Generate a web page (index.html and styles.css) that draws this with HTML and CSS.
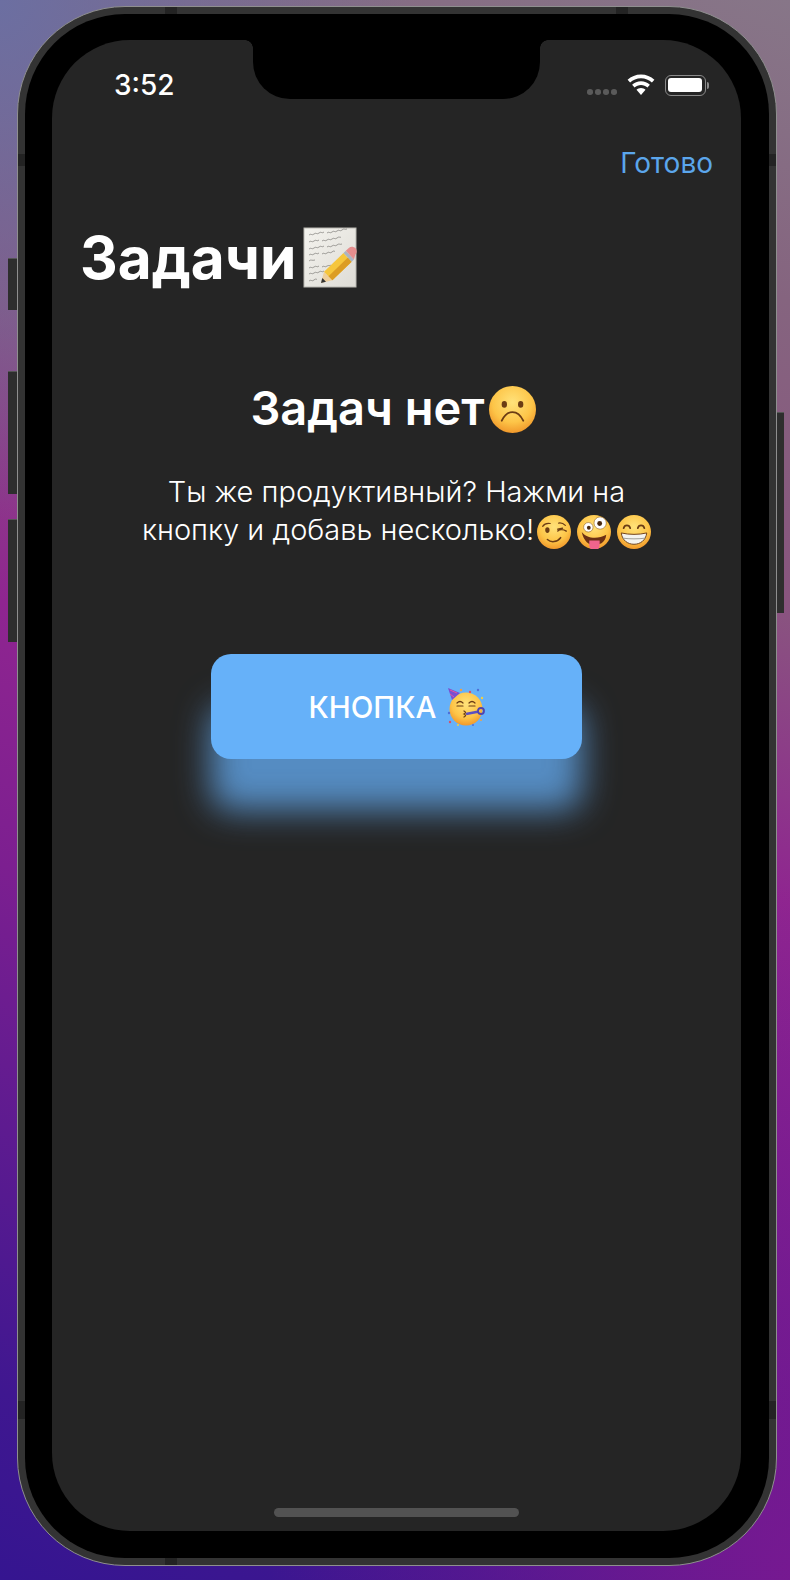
FILE: index.html
```html
<!DOCTYPE html>
<html lang="ru">

<head>
    <meta charset="UTF-8">
    <meta name="viewport" content="width=device-width, initial-scale=1.0">
    <title>Задачи</title>
    <link rel="stylesheet" href="styles.css">
</head>

<body>
    <svg class="defs" width="0" height="0">
        <defs>
            <radialGradient id="face" cx="50%" cy="35%" r="70%">
                <stop offset="0" stop-color="#ffe27a" />
                <stop offset="0.6" stop-color="#fdc548" />
                <stop offset="1" stop-color="#ee8f25" />
            </radialGradient>
            <linearGradient id="paper" x1="0" y1="0" x2="1" y2="1">
                <stop offset="0" stop-color="#f4f3ee" />
                <stop offset="1" stop-color="#dedcd6" />
            </linearGradient>
        </defs>
    </svg>

    <div class="device">
        <span class="side-btn btn-mute"></span>
        <span class="side-btn btn-up"></span>
        <span class="side-btn btn-down"></span>
        <span class="side-btn btn-power"></span>
        <span class="band band-top-l"></span>
        <span class="band band-top-r"></span>
        <span class="band band-bottom-l"></span>
        <span class="band band-side-l1"></span>
        <span class="band band-side-r1"></span>
        <span class="band band-side-l2"></span>
        <span class="band band-side-r2"></span>

        <div class="bezel">
            <div class="screen">
                <div class="notch"></div>

                <div class="status-bar">
                    <span class="status-time">3:52</span>
                    <div class="status-icons">
                        <div class="signal"><i></i><i></i><i></i><i></i></div>
                        <svg class="wifi" width="28" height="22" viewBox="0 0 28 22">
                            <path d="M14 0.500C8.800 0.500 4.100 2.500.6 5.800l2.500 2.800C5.900 6 9.800 4.300 14 4.300s8.100 1.700 10.900 4.300l2.500-2.800C23.900 2.500 19.200.5 14 .5z" fill="#fff" />
                            <path d="M14 7.200c-3.400 0-6.500 1.300-8.900 3.500l2.500 2.800c1.700-1.500 3.900-2.500 6.400-2.500s4.700 1 6.400 2.500l2.500-2.800C20.500 8.500 17.400 7.200 14 7.200z" fill="#fff" />
                            <path d="M14 13.900c-1.800 0-3.400.7-4.500 1.800l4.500 5.300 4.500-5.300c-1.100-1.100-2.700-1.800-4.500-1.800z" fill="#fff" />
                        </svg>
                        <div class="battery">
                            <div class="battery-body"><div class="battery-fill"></div></div>
                            <div class="battery-cap"></div>
                        </div>
                    </div>
                </div>

                <div class="nav-row"><span class="done">Готово</span></div>

                <h1 class="page-title">Задачи<svg class="memo" width="56" height="62" viewBox="0 0 56 62">
                        <rect x="1" y="1" width="52" height="59" fill="url(#paper)" stroke="#b9b8b2" />
                        <g fill="none" stroke="#6a6864" stroke-width="0.6">
                            <path d="M6 8c2-2 3 1 5-1s3 1 5-1 3 1 5-1m3 1c2-2 3 1 5-1s3 1 5-1 3 1 5-1 3 0 5-1" />
                            <path d="M6 15c2-2 3 1 5-1s3 1 5-1m3 1c2-2 3 1 5-1s3 1 5-1 3 1 5-1 3 0 4-1" />
                            <path d="M6 22c2-2 3 1 5-1s3 1 5-1 3 1 5-1m3 1c2-2 3 1 5-1s3 1 5-1 3 0 5-1" />
                            <path d="M6 28c2-2 3 1 5-1s3 1 5-1m3 1c2-2 3 1 5-1s3 1 5-1 2 0 3-1" />
                            <path d="M6 34c2-2 3 0 6-1" />
                            <path d="M6 41c2-2 3 1 5-1s3 1 5-1m3 1c2-2 3 1 5-1 2-1 3 0 4-1" />
                            <path d="M6 47c2-2 3 1 5-1s3 1 5-1 3 1 5-1" />
                            <path d="M6 54c2-2 3 1 5-1s2 0 3-1" />
                        </g>
                        <path d="M18 56l3-11.300 8.400 8.600z" fill="#efcf9c" />
                        <path d="M18 56l1.300-5 3.700 3.800z" fill="#333" />
                        <path d="M21 44.700l19.500-18.700 8.200 8.700-19.300 18.600z" fill="#f6c63c" />
                        <path d="M25.500 49.200l19.400-18.800 3.800 4.300-19.300 18.600z" fill="#dc9d24" />
                        <path d="M40.500 26l2.300-2.200 8.200 8.700-2.300 2.200z" fill="#aab5c2" />
                        <path d="M42.800 23.800l3-2.900c2-1.900 5-1.500 6.500.2 1.800 1.900 1.900 4.700 0 6.500l-1.300 4.900z" fill="#e58e8e" />
                    </svg></h1>

                <div class="empty">
                    <h2 class="empty-title">Задач нет<svg class="emoji emoji-sad" viewBox="0 0 46 46">
                            <circle cx="23" cy="23" r="23" fill="url(#face)" />
                            <ellipse cx="15" cy="18" rx="2.600" ry="3.200" fill="#6b3c14" />
                            <ellipse cx="31" cy="18" rx="2.600" ry="3.200" fill="#6b3c14" />
                            <path d="M12.500 34c3-6.500 7-8.500 10.500-8.500s7.500 2 10.500 8.500" fill="none" stroke="#6b3c14" stroke-width="1.800" stroke-linecap="round" />
                        </svg></h2>
                    <p class="empty-text">Ты же продуктивный? Нажми на<br>кнопку и добавь несколько!<svg class="emoji emoji-sm" viewBox="0 0 36 36">
                            <circle cx="18" cy="18" r="18" fill="url(#face)" />
                            <path d="M6 12c2-3 5-3.500 8-3M23 8.500c3-.5 5 .5 7 2.500" fill="none" stroke="#6b3c14" stroke-width="1.300" stroke-linecap="round" />
                            <ellipse cx="11" cy="16" rx="2.300" ry="3" fill="#6b3c14" />
                            <path d="M22 17c2-2 6-2 9 0M22 15l5-1" fill="none" stroke="#6b3c14" stroke-width="1.500" stroke-linecap="round" />
                            <path d="M11 26c4 3.500 10 3 14-2" fill="none" stroke="#6b3c14" stroke-width="1.600" stroke-linecap="round" />
                        </svg><svg class="emoji emoji-sm emoji-gap" viewBox="0 0 36 36">
                            <circle cx="18" cy="18" r="18" fill="url(#face)" />
                            <circle cx="12" cy="13" r="5" fill="#fff" stroke="#8a5a20" stroke-width="0.600" />
                            <circle cx="24.500" cy="8.500" r="6.500" fill="#fff" stroke="#8a5a20" stroke-width="0.600" />
                            <circle cx="12.500" cy="13.500" r="2" fill="#4a2a10" />
                            <circle cx="24" cy="9" r="2.600" fill="#4a2a10" />
                            <path d="M5 18c5 7 17 8 26 3-1 9-8 11-13 11S7 28 5 18z" fill="#6b2f14" />
                            <path d="M13 27h11v5a5.500 5.500 0 0 1-11 0z" fill="#f0648c" />
                        </svg><svg class="emoji emoji-sm emoji-gap" viewBox="0 0 36 36">
                            <circle cx="18" cy="18" r="18" fill="url(#face)" />
                            <path d="M7 14c1-4 6-4 7 0M22 14c1-4 6-4 7 0" fill="none" stroke="#6b3c14" stroke-width="1.800" stroke-linecap="round" />
                            <path d="M4.500 19c8 2 19 2 27 0-1 8-7 12-13.500 12S5.500 27 4.500 19z" fill="#f4f4f0" stroke="#6b3c14" stroke-width="1" />
                            <path d="M6 24.500c7 1 17 1 24 0" fill="none" stroke="#9a9a94" stroke-width="1" />
                        </svg></p>
                </div>

                <button class="main-btn" type="button">КНОПКА<svg class="emoji emoji-party" viewBox="0 0 38 38">
                        <circle cx="19" cy="21" r="16.500" fill="url(#face)" />
                        <path d="M1 0l12 5-8 7z" fill="#7a4fd0" />
                        <path d="M3 2l7 3M3 6l4 3" stroke="#e8559a" stroke-width="1" />
                        <path d="M10 15c2-2 4-2 6 0M22 15c2-2 4-2 6 0M10 18h6M22 18h6" fill="none" stroke="#6b3c14" stroke-width="1.200" stroke-linecap="round" />
                        <path d="M17 23c2 1 2 2 0 3 2 1 2 2 0 3" fill="none" stroke="#6b3c14" stroke-width="1.300" stroke-linecap="round" />
                        <path d="M19 26l13-2.500" stroke="#5b4fc0" stroke-width="2.400" />
                        <circle cx="34" cy="23" r="3" fill="none" stroke="#4f45b0" stroke-width="1.800" />
                        <circle cx="14" cy="2" r="1.200" fill="#f2a040" />
                        <circle cx="23" cy="4" r="1.200" fill="#d8506a" />
                        <circle cx="31" cy="2" r="1.200" fill="#4f6fd8" />
                        <circle cx="35" cy="10" r="1.200" fill="#f2d040" />
                        <circle cx="2" cy="25" r="1.200" fill="#4f6fd8" />
                        <circle cx="3" cy="34" r="1.200" fill="#d8506a" />
                        <circle cx="11" cy="37" r="1" fill="#f2d040" />
                        <circle cx="26" cy="37" r="1" fill="#4f6fd8" />
                        <circle cx="34" cy="32" r="1" fill="#f2a040" />
                    </svg></button>

                <div class="home-indicator"></div>
            </div>
        </div>
    </div>
</body>

</html>
```

FILE: styles.css
```css
* {
    box-sizing: border-box;
}

html {
    height: 100%;
}

body {
    margin: 0;
    width: 790px;
    height: 1580px;
    padding: 6px 0 0 17px;
    overflow: hidden;
    font-family: Inter, "Noto Sans", sans-serif;
    color: #fff;
    background:
        radial-gradient(ellipse 420px 520px at 0 0, rgba(105, 112, 165, 0.9), rgba(105, 112, 165, 0)),
        radial-gradient(ellipse 520px 700px at 100% 100%, rgba(125, 25, 145, 0.85), rgba(125, 25, 145, 0)),
        linear-gradient(201deg, #877688 0%, #85647f 16%, #89557f 32%, #8f2590 48%, #7c1f90 62%, #3f1790 90%, #351590 100%);
}

.defs {
    position: absolute;
}

.device {
    position: relative;
    width: 760px;
    height: 1560px;
    padding: 7px;
    border: 1px solid #8f8f8f;
    border-radius: 108px;
    background: #333;
}

.bezel {
    height: 100%;
    padding: 26px 28px 27px 27px;
    border-radius: 100px;
    background: #000;
}

.screen {
    position: relative;
    display: flex;
    flex-direction: column;
    height: 100%;
    border-radius: 78px;
    background: #252525;
    overflow: hidden;
}

/* hardware bits on the frame */
.side-btn {
    position: absolute;
    background: #2e2e2e;
    border-top: 1px solid #555;
}

.btn-mute {
    left: -10px;
    top: 251px;
    width: 9px;
    height: 52px;
}

.btn-up {
    left: -10px;
    top: 364px;
    width: 9px;
    height: 123px;
}

.btn-down {
    left: -10px;
    top: 512px;
    width: 9px;
    height: 123px;
}

.btn-power {
    right: -8px;
    top: 405px;
    width: 7px;
    height: 201px;
}

.band {
    position: absolute;
    background: #232323;
}

.band-top-l {
    left: 147px;
    top: 0;
    width: 12px;
    height: 7px;
}

.band-top-r {
    left: 598px;
    top: 0;
    width: 12px;
    height: 7px;
}

.band-bottom-l {
    left: 147px;
    bottom: 0;
    width: 12px;
    height: 7px;
}

.band-side-l1 {
    left: 0;
    top: 147px;
    width: 7px;
    height: 12px;
}

.band-side-r1 {
    right: 0;
    top: 147px;
    width: 7px;
    height: 12px;
}

.band-side-l2 {
    left: 0;
    top: 1394px;
    width: 7px;
    height: 18px;
}

.band-side-r2 {
    right: 0;
    top: 1394px;
    width: 7px;
    height: 18px;
}

.notch {
    position: absolute;
    left: 201px;
    top: 0;
    width: 287px;
    height: 59px;
    background: #000;
    border-radius: 0 0 37px 37px;
}

.notch::before,
.notch::after {
    content: "";
    position: absolute;
    top: 0;
    width: 8px;
    height: 8px;
}

.notch::before {
    left: -8px;
    background: radial-gradient(circle at 0 100%, transparent 7.500px, #000 8px);
}

.notch::after {
    right: -8px;
    background: radial-gradient(circle at 100% 100%, transparent 7.500px, #000 8px);
}

.status-bar {
    display: flex;
    justify-content: space-between;
    align-items: center;
    height: 30px;
    margin-top: 30px;
    padding: 0 32px 0 62px;
}

.status-time {
    font-size: 28px;
    font-weight: 500;
}

.status-icons {
    display: flex;
    align-items: center;
    gap: 10px;
}

.signal {
    display: flex;
    gap: 2.500px;
    margin-top: 14px;
}

.signal i {
    width: 5.500px;
    height: 5.500px;
    border-radius: 50%;
    background: #5a5a5a;
}

.battery {
    display: flex;
    align-items: center;
    gap: 1px;
}

.battery-body {
    width: 41px;
    height: 21px;
    padding: 2.500px;
    border: 1.500px solid #8a8a8a;
    border-radius: 6px;
}

.battery-fill {
    height: 100%;
    border-radius: 3px;
    background: #fff;
}

.battery-cap {
    width: 2.500px;
    height: 7px;
    border-radius: 0 2px 2px 0;
    background: #8a8a8a;
}

.nav-row {
    display: flex;
    justify-content: flex-end;
    margin-top: 46px;
    padding-right: 28px;
}

.done {
    font-size: 28px;
    line-height: 34px;
    color: #5ba6ec;
}

.page-title {
    display: flex;
    align-items: center;
    margin: 44px 0 0;
    padding-left: 28px;
    font-size: 58.500px;
    font-weight: 700;
    line-height: 68px;
}

.memo {
    margin-left: 7px;
}

.empty {
    margin-top: 88px;
    text-align: center;
}

.empty-title {
    margin: 0;
    padding-right: 7px;
    font-size: 47px;
    font-weight: 600;
    line-height: 56px;
}

.empty-text {
    margin: 37px 0 0;
    font-size: 29px;
    font-weight: 300;
    line-height: 38px;
}

.emoji {
    display: inline-block;
}

.emoji-sad {
    width: 47px;
    height: 47px;
    margin-left: 4px;
    vertical-align: -8px;
}

.emoji-sm {
    width: 34px;
    height: 34px;
    margin-left: 3px;
    vertical-align: -9px;
}

.emoji-gap {
    margin-left: 6px;
}

.main-btn {
    display: flex;
    justify-content: center;
    align-items: center;
    gap: 10px;
    align-self: center;
    width: 371px;
    height: 105px;
    margin-top: 105px;
    border: 0;
    border-radius: 20px;
    background: #66b1f9;
    box-shadow: 0 51px 34px rgba(102, 177, 249, 0.74);
    color: #fff;
    font-family: inherit;
    font-size: 29.500px;
    font-weight: 500;
}

.emoji-party {
    width: 38px;
    height: 38px;
}

.home-indicator {
    align-self: center;
    width: 245px;
    height: 9px;
    margin-top: auto;
    margin-bottom: 14px;
    border-radius: 5px;
    background: #525252;
}
```
